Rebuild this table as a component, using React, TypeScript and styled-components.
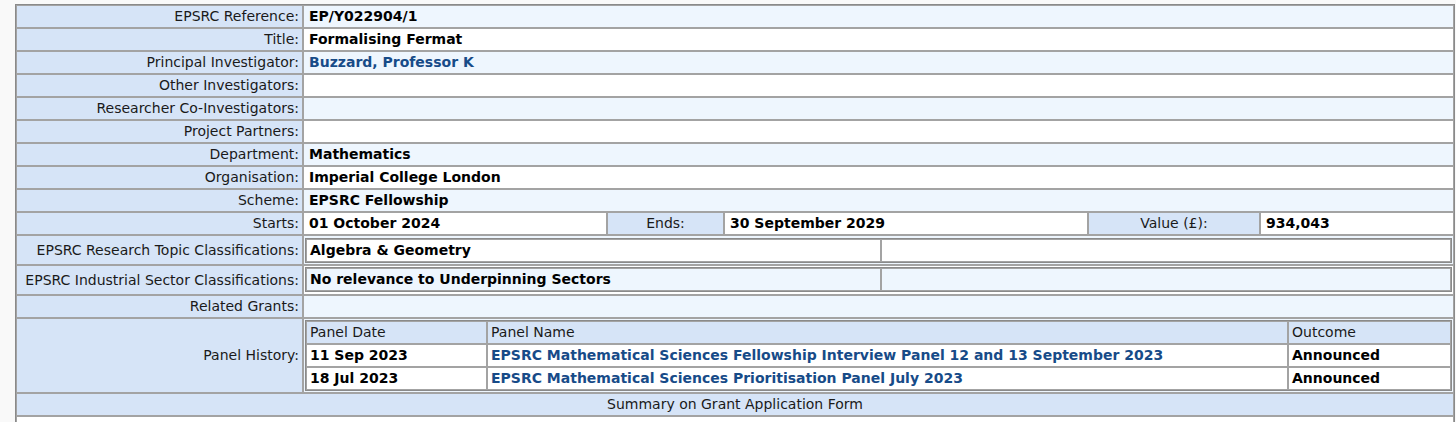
import React from "react";
import styled, { createGlobalStyle } from "styled-components";

const Global = createGlobalStyle`
  html, body { margin: 0; padding: 0; background: #f9f9f9; }
  body { font-family: "DejaVu Sans", Verdana, sans-serif; font-size: 14px; color: #111; }
  *, *::before, *::after { box-sizing: border-box; }
`;

const LABEL_BG = "#d6e4f7";
const LIGHT_BG = "#eef6fe";
const CELL_BORDER = "#a3a3a3";
const LINK = "#174b88";

const Page = styled.div`
  padding: 4px 0 0 15px;
`;

const Grid = styled.table`
  width: 1440px;
  table-layout: fixed;
  border-collapse: separate;
  border-spacing: 0;
  border: 1px solid #8a8a8a;
  font-size: 14px;
  line-height: 17px;
  background: #fff;
`;

const Label = styled.th`
  width: 287px;
  text-align: right;
  font-weight: normal;
  background: ${LABEL_BG};
  border: 1px solid ${CELL_BORDER};
  padding: 2px 3px 2px 4px;
  color: #1a1a1a;
  vertical-align: middle;
  white-space: nowrap;
`;

const Value = styled.td<{ $tone: "light" | "white"; $nested?: "flat" | "box"; $pad?: string }>`
  background: ${(p) => (p.$tone === "light" ? LIGHT_BG : "#fff")};
  border: 1px solid ${CELL_BORDER};
  padding: ${(p) => (p.$nested === "flat" ? "0" : p.$nested === "box" ? p.$pad ?? "1px" : "2px 5px")};
  font-weight: bold;
  color: #000;
  vertical-align: middle;
  white-space: nowrap;
`;

const Link = styled.a`
  color: ${LINK};
  text-decoration: none;
  font-weight: bold;
`;

const Inner = styled.table<{ $boxed?: boolean }>`
  width: 100%;
  table-layout: fixed;
  border-collapse: separate;
  border-spacing: 0;
  border: ${(p) => (p.$boxed ? "1px solid #8a8a8a" : "none")};
  font-size: 14px;
  line-height: 17px;
`;

const FlatCell = styled.td<{ $label?: boolean; $first?: boolean; $last?: boolean }>`
  background: ${(p) => (p.$label ? LABEL_BG : "#fff")};
  border-left: ${(p) => (p.$first ? "none" : `1px solid ${CELL_BORDER}`)};
  border-right: ${(p) => (p.$last ? "none" : `1px solid ${CELL_BORDER}`)};
  padding: 2px 5px;
  text-align: ${(p) => (p.$label ? "center" : "left")};
  font-weight: ${(p) => (p.$label ? "normal" : "bold")};
  color: ${(p) => (p.$label ? "#1a1a1a" : "#000")};
  white-space: nowrap;
`;

const BoxCell = styled.td<{ $tone: "light" | "white" | "head" }>`
  background: ${(p) => (p.$tone === "head" ? LABEL_BG : p.$tone === "light" ? LIGHT_BG : "#fff")};
  border: 1px solid ${CELL_BORDER};
  padding: 2px 3px;
  font-weight: ${(p) => (p.$tone === "head" ? "normal" : "bold")};
  color: ${(p) => (p.$tone === "head" ? "#1a1a1a" : "#000")};
  white-space: nowrap;
  overflow: hidden;
`;

const Summary = styled.th`
  background: ${LABEL_BG};
  border: 1px solid ${CELL_BORDER};
  padding: 2px 4px;
  font-weight: normal;
  text-align: center;
  color: #1a1a1a;
`;

const Body = styled.td`
  background: #fff;
  border: 1px solid ${CELL_BORDER};
  height: 40px;
`;

type Simple = { label: string; value?: React.ReactNode; tone: "light" | "white" };

const simpleRows: Simple[] = [
  { label: "EPSRC Reference:", value: "EP/Y022904/1", tone: "light" },
  { label: "Title:", value: "Formalising Fermat", tone: "white" },
  { label: "Principal Investigator:", value: <Link href="#">Buzzard, Professor K</Link>, tone: "light" },
  { label: "Other Investigators:", tone: "white" },
  { label: "Researcher Co-Investigators:", tone: "light" },
  { label: "Project Partners:", tone: "white" },
  { label: "Department:", value: "Mathematics", tone: "light" },
  { label: "Organisation:", value: "Imperial College London", tone: "white" },
  { label: "Scheme:", value: "EPSRC Fellowship", tone: "light" },
];

const panels = [
  { date: "11 Sep 2023", name: "EPSRC Mathematical Sciences Fellowship Interview Panel 12 and 13 September 2023", outcome: "Announced" },
  { date: "18 Jul 2023", name: "EPSRC Mathematical Sciences Prioritisation Panel July 2023", outcome: "Announced" },
];

function Classification({
  text,
  tone,
  inner,
  pad,
}: {
  text: string;
  tone: "light" | "white";
  inner: "light" | "white";
  pad: string;
}) {
  return (
    <Value $tone={tone} $nested="box" $pad={pad}>
      <Inner $boxed>
        <colgroup>
          <col style={{ width: 575 }} />
          <col />
        </colgroup>
        <tbody>
          <tr>
            <BoxCell $tone={inner}>{text}</BoxCell>
            <BoxCell $tone={inner} />
          </tr>
        </tbody>
      </Inner>
    </Value>
  );
}

export default function App() {
  return (
    <>
      <Global />
      <Page>
        <Grid>
          <colgroup>
            <col style={{ width: 287 }} />
            <col />
          </colgroup>
          <tbody>
            {simpleRows.map((r) => (
              <tr key={r.label}>
                <Label>{r.label}</Label>
                <Value $tone={r.tone}>{r.value ?? "\u00a0"}</Value>
              </tr>
            ))}
            <tr>
              <Label>Starts:</Label>
              <Value $tone="white" $nested="flat">
                <Inner>
                  <colgroup>
                    <col style={{ width: 303 }} />
                    <col style={{ width: 117 }} />
                    <col style={{ width: 364 }} />
                    <col style={{ width: 172 }} />
                    <col />
                  </colgroup>
                  <tbody>
                    <tr>
                      <FlatCell $first>01 October 2024</FlatCell>
                      <FlatCell $label>Ends:</FlatCell>
                      <FlatCell>30 September 2029</FlatCell>
                      <FlatCell $label>Value (£):</FlatCell>
                      <FlatCell $last>934,043</FlatCell>
                    </tr>
                  </tbody>
                </Inner>
              </Value>
            </tr>
            <tr>
              <Label>EPSRC Research Topic Classifications:</Label>
              <Classification text="Algebra & Geometry" tone="light" inner="white" pad="2px 1px 1px" />
            </tr>
            <tr>
              <Label>EPSRC Industrial Sector Classifications:</Label>
              <Classification text="No relevance to Underpinning Sectors" tone="white" inner="light" pad="1px 1px 2px" />
            </tr>
            <tr>
              <Label>Related Grants:</Label>
              <Value $tone="light">{"\u00a0"}</Value>
            </tr>
            <tr>
              <Label>Panel History:</Label>
              <Value $tone="light" $nested="box" $pad="1px">
                <Inner $boxed>
                  <colgroup>
                    <col style={{ width: 181 }} />
                    <col style={{ width: 801 }} />
                    <col />
                  </colgroup>
                  <tbody>
                    <tr>
                      <BoxCell $tone="head">Panel Date</BoxCell>
                      <BoxCell $tone="head">Panel Name</BoxCell>
                      <BoxCell $tone="head">Outcome</BoxCell>
                    </tr>
                    {panels.map((p) => (
                      <tr key={p.date}>
                        <BoxCell $tone="white">{p.date}</BoxCell>
                        <BoxCell $tone="white">
                          <Link href="#">{p.name}</Link>
                        </BoxCell>
                        <BoxCell $tone="white">{p.outcome}</BoxCell>
                      </tr>
                    ))}
                  </tbody>
                </Inner>
              </Value>
            </tr>
            <tr>
              <Summary colSpan={2}>Summary on Grant Application Form</Summary>
            </tr>
            <tr>
              <Body colSpan={2} />
            </tr>
          </tbody>
        </Grid>
      </Page>
    </>
  );
}
